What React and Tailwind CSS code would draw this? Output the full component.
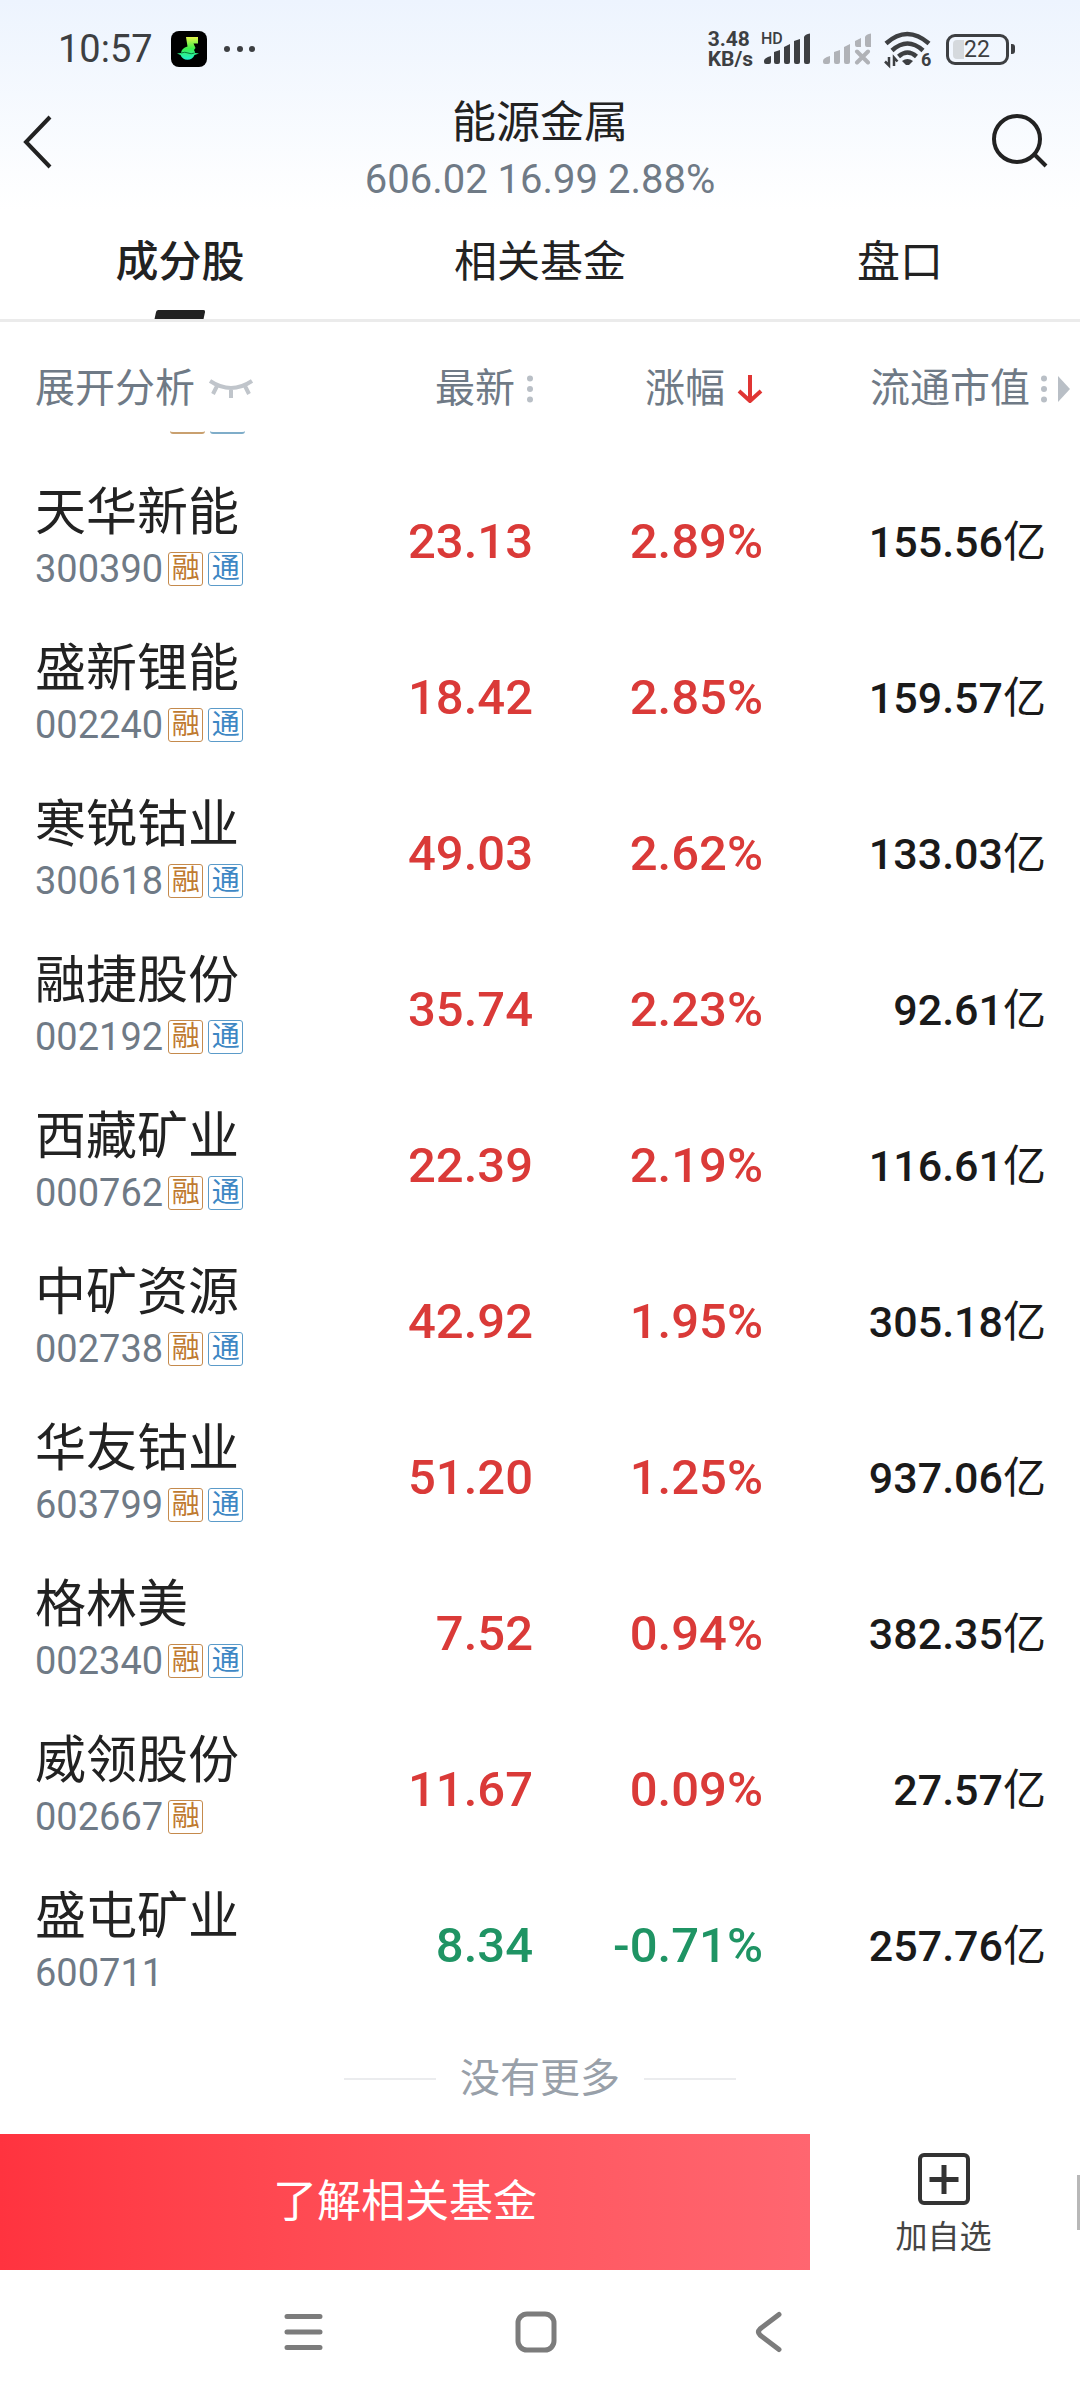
import React, { useState } from 'react';

const stocks = [
  { name: '天华新能', code: '300390', tags: ['融', '通'], price: '23.13', change: '2.89%', cap: '155.56亿' },
  { name: '盛新锂能', code: '002240', tags: ['融', '通'], price: '18.42', change: '2.85%', cap: '159.57亿' },
  { name: '寒锐钴业', code: '300618', tags: ['融', '通'], price: '49.03', change: '2.62%', cap: '133.03亿' },
  { name: '融捷股份', code: '002192', tags: ['融', '通'], price: '35.74', change: '2.23%', cap: '92.61亿' },
  { name: '西藏矿业', code: '000762', tags: ['融', '通'], price: '22.39', change: '2.19%', cap: '116.61亿' },
  { name: '中矿资源', code: '002738', tags: ['融', '通'], price: '42.92', change: '1.95%', cap: '305.18亿' },
  { name: '华友钴业', code: '603799', tags: ['融', '通'], price: '51.20', change: '1.25%', cap: '937.06亿' },
  { name: '格林美', code: '002340', tags: ['融', '通'], price: '7.52', change: '0.94%', cap: '382.35亿' },
  { name: '威领股份', code: '002667', tags: ['融'], price: '11.67', change: '0.09%', cap: '27.57亿' },
  { name: '盛屯矿业', code: '600711', tags: [], price: '8.34', change: '-0.71%', cap: '257.76亿' },
];

const tabs = ['成分股', '相关基金', '盘口'];

const StatusBar = () => (
  <div className="flex h-[98px] items-center justify-between pl-[58px] pr-[65px] text-[#3d3f42]">
    <div className="flex items-center">
      <span className="text-[38px] leading-[48px]">10:57</span>
      <svg className="ml-[18px] h-9 w-9" viewBox="0 0 36 36">
        <defs>
          <linearGradient id="note" x1="0" y1="0" x2="0" y2="1">
            <stop offset="0" stopColor="#e4f54a" />
            <stop offset="0.5" stopColor="#3df04a" />
            <stop offset="1" stopColor="#1ff0d0" />
          </linearGradient>
        </defs>
        <rect width="36" height="36" rx="8" fill="#000" />
        <path
          d="M15 6h12v6.500h-4.500l2 4.500-1.500 2q1 1.500 1 3l4 .5-4.500 1.500a7.500 7.500 0 0 1-14 0L6 22.500l4-.5q.5-5 6.500-6.500z"
          fill="url(#note)"
        />
        <path d="M10 22q4-1.500 7 0t6.500 0" fill="none" stroke="#0a7a3a" strokeWidth="1" />
      </svg>
      <svg className="ml-4 h-2 w-8" viewBox="0 0 32 8" fill="currentColor">
        <circle cx="4" cy="4" r="3" />
        <circle cx="17" cy="4" r="3" />
        <circle cx="29" cy="4" r="3" />
      </svg>
    </div>

    <div className="flex items-center">
      <div className="text-[21px] font-bold leading-[20px]">
        <div>3.48</div>
        <div>KB/s</div>
      </div>
      <svg className="ml-2 h-12 w-[50px]" viewBox="0 -8 50 48" fill="currentColor">
        <text x="0" y="11" fontSize="16" fontWeight="500">HD</text>
        <path d="M3 28q0-3 7-5v6q0 2-2 2H5q-2 0-2-2zM13 19l6-2v12q0 2-2 2h-2q-2 0-2-2zM23 14l6-3v18q0 2-2 2h-2q-2 0-2-2zM33 8l6-2v23q0 2-2 2h-2q-2 0-2-2zM43 4q1-3 6-3.500v28.500q0 2-2 2h-2q-2 0-2-2z" />
      </svg>
      <svg className="ml-3 h-8 w-12 text-[#b0b2b7]" viewBox="0 0 48 32" fill="currentColor">
        <path d="M0 28q0-3 7-5v6q0 2-2 2H2q-2 0-2-2zM11 19l6-2v12q0 2-2 2h-2q-2 0-2-2zM21 14l6-3v18q0 2-2 2h-2q-2 0-2-2zM32 8l6-3v9h-4q-2 0-2-2zM42 4q1-3 6-3.500v13.500h-4q-2 0-2-2z" />
        <path d="m34 18.500 11 11m0-11-11 11" stroke="currentColor" strokeWidth="4" strokeLinecap="round" />
      </svg>
      <svg className="ml-[13px] h-12 w-12" viewBox="0 -6 48 48" fill="none" stroke="currentColor">
        <path d="M2 12.500q21-19 43 0M8 19.500q15.500-14 31 0M14.500 25.500q9-8 18 0" strokeWidth="4.500" />
        <path d="M18 30q5.500-4 11 0l-4 4h-3z" fill="currentColor" stroke="none" />
        <path d="M5 26v8.500l-4-4M10 35v-8.500l3.500 4" strokeWidth="2.500" />
        <text x="37" y="35" fontSize="18" fontWeight="700" fill="currentColor" stroke="none">6</text>
      </svg>
      <div className="ml-[14px] flex items-center">
        <div className="flex h-[31px] w-[63px] items-center rounded-[9px] border-3 border-[#3d3f42] pl-1">
          <div className="h-[19px] w-[11px] rounded-l-[4px] bg-[#d5d9dd]" />
          <span className="text-[23px] leading-[25px]">22</span>
        </div>
        <div className="ml-[2px] h-[10px] w-1 rounded-r-[3px] bg-[#3d3f42]" />
      </div>
    </div>
  </div>
);

const TitleBar = () => (
  <header className="flex items-start justify-between">
    <button aria-label="返回" className="flex h-[88px] w-[76px] items-center pl-[22px]">
      <svg className="h-14 w-8" viewBox="0 0 32 56" fill="none" stroke="#222" strokeWidth="4">
        <path d="M28 3 4 28l24 25" />
      </svg>
    </button>
    <div className="flex flex-col items-center gap-2">
      <h1 className="text-[44px] leading-[50px] text-[#222]">能源金属</h1>
      <p className="text-[40px] leading-[48px] text-[#6f7a86]">606.02 16.99 2.88%</p>
    </div>
    <button aria-label="搜索" className="flex h-[88px] w-[76px] items-center justify-end pr-8">
      <svg className="h-14 w-14 shrink-0" viewBox="0 0 56 56" fill="none" stroke="#222" strokeWidth="4">
        <circle cx="25" cy="25" r="23" />
        <path d="m42 40 12 12" />
      </svg>
    </button>
  </header>
);

const SortDots = () => (
  <svg className="h-7 w-[6px] shrink-0" viewBox="0 0 6 28" fill="#b9bfc6">
    <circle cx="3" cy="3.500" r="3" />
    <circle cx="3" cy="14" r="3" />
    <circle cx="3" cy="24.500" r="3" />
  </svg>
);

const Tag = ({ text }) => (
  <span
    className={`flex h-[34px] w-[35px] items-center justify-center rounded-[3px] border text-[28px] leading-[32px] ${
      text === '融' ? 'border-[#c58a4c] text-[#bf7a30]' : 'border-[#5b9bc9] text-[#3d87c4]'
    }`}
  >
    {text}
  </span>
);

const StockRow = ({ stock }) => {
  const color = stock.change.startsWith('-') ? 'text-[#1f9464]' : 'text-[#da3a38]';
  return (
    <tr className="h-[156px]">
      <td className="pb-3 pl-[35px]">
        <div className="flex flex-col gap-[6px]">
          <a href="#" className="text-[51px] leading-[60px] text-[#222]">{stock.name}</a>
          <div className="flex h-10 items-center gap-[5px]">
            <span className="text-[38px] leading-[40px] text-[#6f7a86]">{stock.code}</span>
            {stock.tags.map((tag) => (
              <Tag key={tag} text={tag} />
            ))}
          </div>
        </div>
      </td>
      <td className={`text-right text-[49px] font-medium leading-[60px] ${color}`}>{stock.price}</td>
      <td className={`text-right text-[49px] font-medium leading-[60px] ${color}`}>{stock.change}</td>
      <td className="pr-[34px] text-right text-[43px] font-medium leading-[60px] text-[#1a1a1a]">
        {stock.cap.slice(0, -1)}
        <span className="font-normal">{stock.cap.slice(-1)}</span>
      </td>
    </tr>
  );
};

const App = () => {
  const [activeTab, setActiveTab] = useState(0);

  return (
    <div className="flex min-h-screen flex-col bg-white font-[Roboto,'Noto_Sans_CJK_SC',sans-serif]">
      <div className="bg-linear-to-b from-[#edf4fe] to-white to-[210px]">
        <StatusBar />
        <TitleBar />
        <nav className="grid grid-cols-3 border-b-3 border-[#ebebeb]">
          {tabs.map((tab, index) => (
            <button
              key={tab}
              className={`relative h-[115px] text-[43px] leading-[48px] text-[#222] ${index === activeTab ? 'font-medium' : ''}`}
              onClick={() => setActiveTab(index)}
            >
              {tab}
              {index === activeTab && (
                <span className="absolute bottom-0 left-1/2 h-[9px] w-[49px] -translate-x-1/2 -skew-x-12 rounded-t-[2px] bg-[#222]" />
              )}
            </button>
          ))}
        </nav>
      </div>

      <table className="w-full table-fixed">
        <colgroup>
          <col />
          <col className="w-[230px]" />
          <col className="w-[230px]" />
          <col className="w-[317px]" />
        </colgroup>
        <thead className="text-[40px] leading-[48px] text-[#6f7a86]">
          <tr className="h-[109px]">
            <th className="pl-[35px] pt-6 font-normal">
              <button className="flex items-center gap-[14px] whitespace-nowrap">
                展开分析
                <svg className="h-5 w-[44px]" viewBox="0 0 44 20" fill="none" stroke="#c0c5cb" strokeWidth="4">
                  <path d="M1 2q21 14 42 0M8 7l-4 8M22 9v10M36 7l4 8" />
                </svg>
              </button>
            </th>
            <th className="pt-6 font-normal">
              <button className="flex w-full items-center justify-end gap-3">
                最新
                <SortDots />
              </button>
            </th>
            <th className="pt-6 font-normal">
              <button className="flex w-full items-center justify-end gap-3">
                涨幅
                <svg className="h-7 w-[26px]" viewBox="0 0 26 28" fill="none" stroke="#e03533" strokeWidth="4">
                  <path d="M13 0v26M2 16l11 10 11-10" />
                </svg>
              </button>
            </th>
            <th className="pr-[10px] pt-6 font-normal">
              <button className="flex w-full items-center justify-end gap-[11px] whitespace-nowrap">
                流通市值
                <SortDots />
                <svg className="h-7 w-3" viewBox="0 0 12 28" fill="#b9bfc6">
                  <path d="M0 1v26l12-13z" />
                </svg>
              </button>
            </th>
          </tr>
        </thead>
        <tbody>
          {/* bottom edge of the row scrolled under the header */}
          <tr className="h-[33px]">
            <td colSpan={4} className="pl-[170px] align-top">
              <div className="flex gap-[5px]">
                <div className="h-[3px] w-[35px] rounded-b-[3px] border-b-2 border-[#c9a06f]" />
                <div className="h-[3px] w-[35px] rounded-b-[3px] border-b-2 border-[#7fadc9]" />
              </div>
            </td>
          </tr>
          {stocks.map((stock) => (
            <StockRow key={stock.code} stock={stock} />
          ))}
        </tbody>
      </table>

      <div className="flex flex-1 items-center justify-center gap-6 text-[40px] leading-[48px] text-[#98a0a9]">
        <span className="h-[2px] w-[92px] bg-[#ebecee]" />
        没有更多
        <span className="h-[2px] w-[92px] bg-[#ebecee]" />
      </div>

      <footer className="flex h-[136px] items-center">
        <button className="h-full w-3/4 bg-linear-to-r from-[#ff333f] to-[#ff6670] text-[44px] leading-[50px] text-white">
          了解相关基金
        </button>
        <button className="flex flex-1 flex-col items-center gap-[11px] pt-1 text-[32px] leading-[40px] text-[#444]">
          <svg className="h-[54px] w-[54px]" viewBox="0 0 54 54" fill="none" stroke="#333" strokeWidth="4">
            <rect x="3" y="3" width="48" height="48" rx="4" />
            <path d="M27 13v29M12.500 27.500h29" strokeWidth="5" />
          </svg>
          加自选
        </button>
        <span className="h-[55px] w-[3px] bg-[#b8b8b8]" />
      </footer>

      <nav className="grid h-[130px] grid-cols-3 items-center justify-items-center pb-[6px] pl-[186px] pr-[194px]">
        <button aria-label="最近任务">
          <svg className="h-11 w-11" viewBox="0 0 44 44" fill="none" stroke="#7c7c7c" strokeWidth="5" strokeLinecap="round">
            <path d="M6 6.500h33M6 22h33M6 37.500h33" />
          </svg>
        </button>
        <button aria-label="主屏幕">
          <svg className="h-11 w-11" viewBox="0 0 44 44" fill="none" stroke="#7c7c7c" strokeWidth="5">
            <rect x="4" y="4" width="36" height="36" rx="9" />
          </svg>
        </button>
        <button aria-label="返回上级">
          <svg className="h-11 w-11" viewBox="0 0 44 44" fill="none" stroke="#7c7c7c" strokeWidth="5" strokeLinecap="round">
            <path d="M32 4.500 13 19q-3 3 0 6l19 14.500" />
          </svg>
        </button>
      </nav>
    </div>
  );
};

export default App;
